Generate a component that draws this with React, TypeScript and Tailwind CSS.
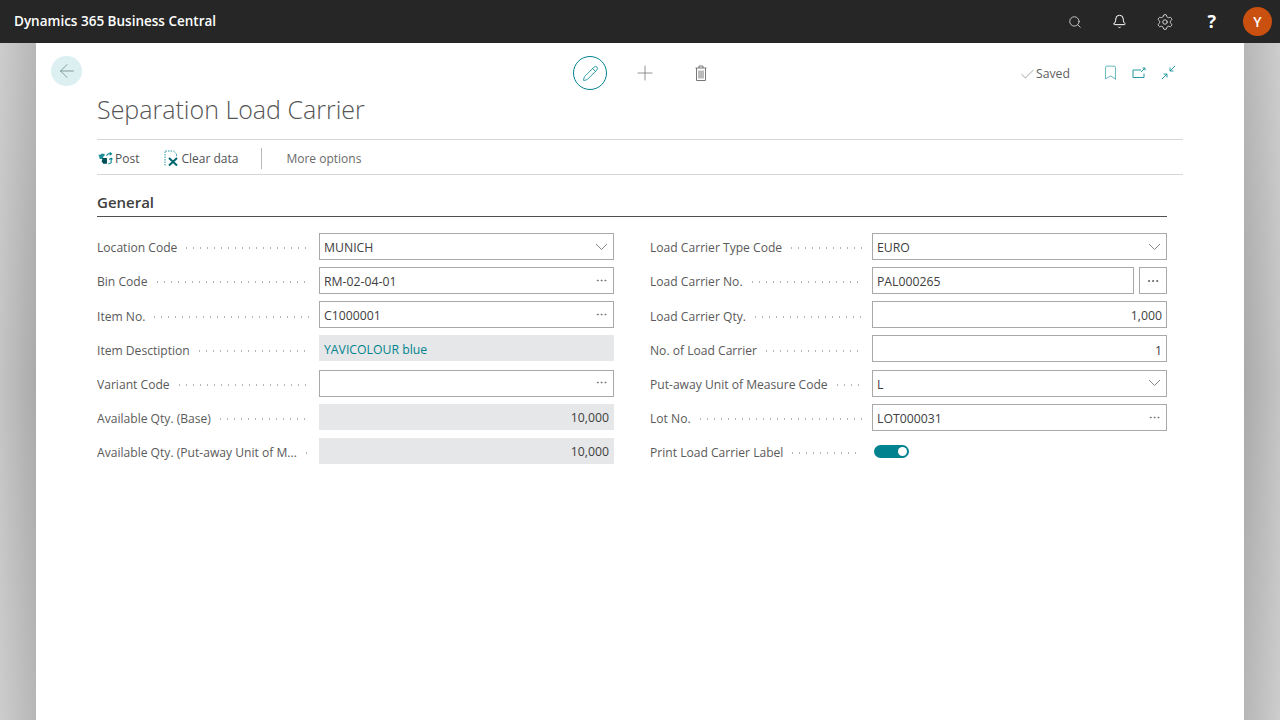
import React from 'react';
import { Search, Bell, Settings, Check, Bookmark, ArrowLeft, Plus, Pencil, Ellipsis } from 'lucide-react';

type Field = {
  label: string;
  value?: string;
  kind?: 'select' | 'lookup' | 'plain' | 'readonly' | 'link' | 'assist' | 'toggle';
  right?: boolean;
};

const leftFields: Field[] = [
  { label: 'Location Code', value: 'MUNICH', kind: 'select' },
  { label: 'Bin Code', value: 'RM-02-04-01', kind: 'lookup' },
  { label: 'Item No.', value: 'C1000001', kind: 'lookup' },
  { label: 'Item Desctiption', value: 'YAVICOLOUR blue', kind: 'link' },
  { label: 'Variant Code', value: '', kind: 'lookup' },
  { label: 'Available Qty. (Base)', value: '10,000', kind: 'readonly', right: true },
  { label: 'Available Qty. (Put-away Unit of M...', value: '10,000', kind: 'readonly', right: true },
];

const rightFields: Field[] = [
  { label: 'Load Carrier Type Code', value: 'EURO', kind: 'select' },
  { label: 'Load Carrier No.', value: 'PAL000265', kind: 'assist' },
  { label: 'Load Carrier Qty.', value: '1,000', kind: 'plain', right: true },
  { label: 'No. of Load Carrier', value: '1', kind: 'plain', right: true },
  { label: 'Put-away Unit of Measure Code', value: 'L', kind: 'select' },
  { label: 'Lot No.', value: 'LOT000031', kind: 'lookup' },
  { label: 'Print Load Carrier Label', kind: 'toggle' },
];

const Chevron = () => (
  <svg width="13" height="8" viewBox="0 0 13 8" fill="none" className="mr-[2px] -mt-[3px]">
    <path d="M1 1l5.500 5.500L12 1" stroke="#777" strokeWidth="0.9" />
  </svg>
);

const FieldControl: React.FC<{ field: Field }> = ({ field }) => {
  const { kind, value, right } = field;
  if (kind === 'toggle') {
    return (
      <div className="flex h-[26px] items-center pl-[2px] pt-[2px]">
        <div className="flex h-[13px] w-[35px] items-center justify-end rounded-full bg-[#00838f] pr-[2px]">
          <div className="h-[9px] w-[9px] rounded-full bg-white" />
        </div>
      </div>
    );
  }
  if (kind === 'readonly' || kind === 'link') {
    return (
      <div className={`flex h-[26px] items-center bg-[#e6e7e8] pt-[3px] pl-[5px] pr-[5px] ${right ? 'justify-end' : ''} ${kind === 'link' ? 'text-[#00838f]' : 'text-[#404040]'}`}>
        {value}
      </div>
    );
  }
  if (kind === 'assist') {
    return (
      <div className="flex gap-[5px]">
        <div className="flex h-[27px] flex-1 items-center border border-[#a9a9a9] px-[4px] pt-[3.6px] text-[#404040]">{value}</div>
        <div className="flex h-[27px] w-[28px] items-center justify-center border border-[#a9a9a9] text-[#555]">
          <Ellipsis size={14} strokeWidth={1.5} />
        </div>
      </div>
    );
  }
  return (
    <div className={`flex h-[27px] items-center border border-[#a9a9a9] pl-[4px] pr-[3px] pt-[3.6px] text-[#404040] ${right ? 'justify-end' : 'justify-between'}`}>
      <span className={right ? 'pr-[1px]' : ''}>{value}</span>
      {kind === 'select' && <Chevron />}
      {kind === 'lookup' && <Ellipsis size={13} strokeWidth={1.3} className="mr-[2px] -mt-[4px] text-[#666]" />}
    </div>
  );
};

const FieldRow: React.FC<{ field: Field }> = ({ field }) => (
  <div className="flex h-[34.17px] items-start text-[12.25px]">
    <div className="flex h-[27px] w-[222px] shrink-0 items-center overflow-hidden pr-[10px] pt-[3.6px] text-[12.1px] text-[#5a5a5a]">
      <span className="whitespace-nowrap">{field.label}</span>
      <span className="ml-[6px] h-[2px] min-w-0 flex-1 bg-[radial-gradient(circle,#b4b4b4_0.8px,transparent_1px)] bg-[length:7px_2px]" />
    </div>
    <div className="flex-1">
      <FieldControl field={field} />
    </div>
  </div>
);

const PostIcon = () => (
  <svg width="15" height="14" viewBox="0 0 16 14" fill="none">
    <path d="M0.500 2.500h2l1-1h3.500v2l-1.500 1v2.500h-3.500z" fill="#1d8d96" />
    <path d="M5 6h4.500v6H5.500L4 9.500z" fill="#004f57" />
    <path d="M9 3.500l2-2h3.500M12.500 0l2 1.500-2 1.500M11 12.500l3-1.500v-5M12 7.500l2-1.500 1.500 1.500" stroke="#00838f" strokeWidth="1.100" />
  </svg>
);

const ClearIcon = () => (
  <svg width="15" height="17" viewBox="0 0 15 17" fill="none">
    <path d="M1 15.500V1h8.500l3 3v3" stroke="#2b98a1" strokeWidth="1" strokeDasharray="1.500 1" />
    <path d="M5 8l8 7.500M13 8l-8 7.500" stroke="#00666f" strokeWidth="2" />
  </svg>
);

const TrashIcon = () => (
  <svg width="12" height="16" viewBox="0 0 12 16" fill="none" stroke="#777" strokeWidth="1">
    <path d="M0.500 3h11M4 3V1h4v2M1.500 3v12.500h9V3" />
    <path d="M4 5.500v8M6 5.500v8M8 5.500v8" />
  </svg>
);

const App: React.FC = () => {
  return (
    <div className="flex h-[720px] w-[1280px] flex-col overflow-hidden bg-[#c4c4c4] font-['Open_Sans','Noto_Sans',sans-serif] text-[12px]">
      <header className="flex h-[43px] shrink-0 items-center justify-between bg-[#262626] pl-[14px] pr-[8px] text-white">
        <div className="text-[13.5px] font-semibold">Dynamics 365 Business Central</div>
        <div className="flex items-center">
          <Search size={14} strokeWidth={1.5} className="mr-[30px] text-[#d8d8d8]" />
          <Bell size={15} strokeWidth={1.6} className="mr-[29px]" />
          <Settings size={18} strokeWidth={1.2} className="mr-[33px] text-[#e0e0e0]" />
          <span className="mr-[27px] text-[18px] font-bold">?</span>
          <div className="flex h-[29px] w-[29px] items-center justify-center rounded-full bg-[#ca5010] text-[14px] font-semibold">Y</div>
        </div>
      </header>

      <div className="flex min-h-0 flex-1">
        <div className="w-[36px] shrink-0 bg-gradient-to-r from-[#c4c4c4] to-[#aaaaaa]">
          <div className="h-full bg-gradient-to-b from-white/15 via-transparent to-white/15" />
        </div>
        <main className="min-w-0 flex-1 bg-white pl-[15px] pr-[61px]">
          <div className="relative flex h-[47px] items-start">
            <button className="mt-[13px] flex h-[30px] w-[31px] items-center justify-center rounded-full bg-[#dcf0f2] text-[#5f7f84]">
              <ArrowLeft size={22} strokeWidth={0.8} />
            </button>
            <div className="absolute left-[522px] top-[13px] flex items-center">
              <div className="flex h-[34px] w-[34px] items-center justify-center rounded-full border border-[#00838f] text-[#00838f]">
                <Pencil size={17} strokeWidth={1.1} />
              </div>
              <Plus size={24} strokeWidth={0.8} className="ml-[26px] text-[#777]" />
              <div className="ml-[38px]">
                <TrashIcon />
              </div>
            </div>
            <div className="absolute right-[7px] top-[22px] flex items-center text-[12.25px] text-[#606060]">
              <Check size={17} strokeWidth={0.8} />
              <span>Saved</span>
              <Bookmark size={17} strokeWidth={1} className="ml-[32px] -mt-[3px] text-[#2b98a1]" />
              <svg width="15" height="12" viewBox="0 0 15 12" fill="none" className="ml-[13px] -mt-[3px]">
                <path d="M9 3H1v7.500h11V6.500M9 5l4-4M10.500 1H13v2.500" stroke="#2b98a1" strokeWidth="1" />
              </svg>
              <svg width="15" height="15" viewBox="0 0 15 15" fill="none" className="ml-[14px] -mt-[3px]">
                <path d="M14 1L9 6M9 2.500V6h3.500M1 14l5-5M2.500 9H6v3.500" stroke="#2b98a1" strokeWidth="1" />
              </svg>
            </div>
          </div>

          <div className="pl-[46px]">
            <h1 className="flex h-[40px] items-center text-[25px] font-light text-[#555]">Separation Load Carrier</h1>
            <div className="mt-[9px] flex h-[36px] items-center border-y border-[#d6d6d6] pt-[3px] text-[#505050]">
              <div className="flex items-center pl-[1px]">
                <PostIcon />
                <span className="ml-[2px]">Post</span>
              </div>
              <div className="ml-[25px] flex items-center">
                <ClearIcon />
                <span className="ml-[2px]">Clear data</span>
              </div>
              <div className="ml-[23px] h-[21px] w-px bg-[#b8b8b8]" />
              <span className="ml-[24px] text-[#6a6a6a]">More options</span>
            </div>

            <div className="mr-[16px]">
              <div className="mt-[17px] flex h-[25px] items-center border-b border-[#505050] pb-[4px] text-[15px] font-semibold text-[#404040]">General</div>
              <div className="mt-[16px] grid grid-cols-2 gap-x-[36px]">
                <div>
                  {leftFields.map((f) => <FieldRow key={f.label} field={f} />)}
                </div>
                <div>
                  {rightFields.map((f) => <FieldRow key={f.label} field={f} />)}
                </div>
              </div>
            </div>
          </div>
        </main>
        <div className="w-[36px] shrink-0 bg-gradient-to-l from-[#c4c4c4] to-[#aaaaaa]">
          <div className="h-full bg-gradient-to-b from-white/15 via-transparent to-white/15" />
        </div>
      </div>
    </div>
  );
};

export default App;
